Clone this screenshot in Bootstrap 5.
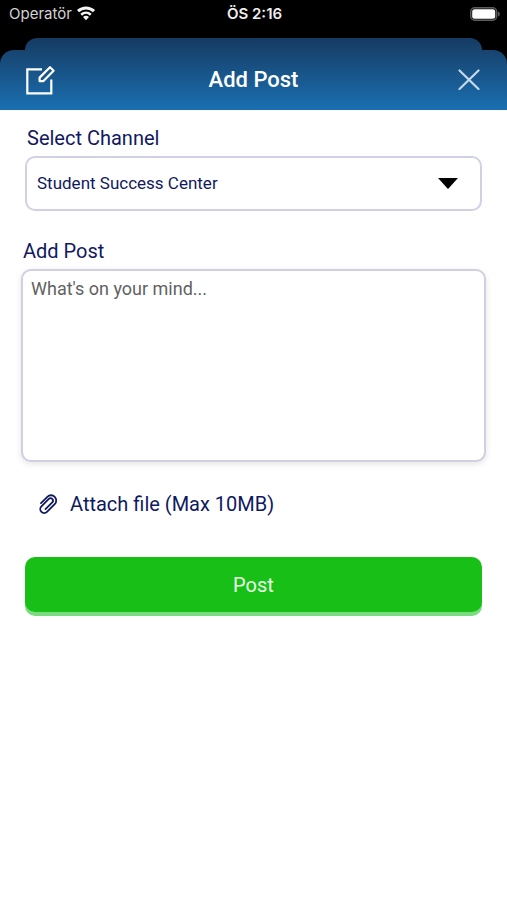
<!DOCTYPE html>
<html lang="en">
<head>
<meta charset="utf-8">
<meta name="viewport" content="width=device-width, initial-scale=1">
<title>Add Post</title>
<link href="https://cdn.jsdelivr.net/npm/bootstrap@5.3.0/dist/css/bootstrap.min.css" rel="stylesheet">
<style>
  body { font-family: Roboto, "Liberation Sans", sans-serif; color: #10195f; background: #fff; }
  .status-bar { height: 38px; padding: 0 7px 10px 9px; font: 15px/28px Inter, Roboto, sans-serif; color: #d2d2d2; }
  .status-time { font-weight: 600; color: #eee; }
  .back-sheet { height: 12px; margin: 0 25px; border-radius: 12px 12px 0 0; background: linear-gradient(#143b62, #17446f); }
  .sheet-header { height: 60px; padding: 0 25px; border-radius: 14px 14px 0 0; background: linear-gradient(#17446f, #1a6fb2); }
  .sheet-title { font-size: 22px; line-height: 28px; font-weight: 500; }
  .icon-button { width: 32px; height: 32px; }
  .form-area { padding: 16px 25px; }
  .field-label { margin: 0 2px 6px; font-size: 20px; line-height: 24px; }
  .channel-select { height: 55px; padding: 0 10px; font-size: 17px; color: #10195f; border: 2px solid #d0d0e6; border-radius: 10px;
    background-image: url("data:image/svg+xml,%3Csvg xmlns='http://www.w3.org/2000/svg' viewBox='0 0 20 11'%3E%3Cpath d='M0 0h20L10 11z'/%3E%3C/svg%3E");
    background-size: 20px 11px; background-position: right 22px center; }
  .post-block { margin: 28px -4px 0; }
  .post-text { height: 193px; padding: 6px 8px; font-size: 18px; line-height: 24px; border: 2px solid #d0d0e2; border-radius: 10px; resize: none; box-shadow: 0 2px 6px #0000001c; }
  .post-text::placeholder { color: #626262; }
  .attach { margin: 28px 0 0 11px; font-size: 20px; line-height: 28px; color: #10195f; }
  .post-button { height: 55px; margin-top: 39px; font-size: 20px; color: #e9ffe9; background: #17bf17; border-radius: 10px; box-shadow: 0 4px 0 #7bdb7f; }
  .post-button:hover { color: #fff; background: #14ad14; }
</style>
<script src="https://cdn.jsdelivr.net/npm/bootstrap@5.3.0/dist/js/bootstrap.bundle.min.js"></script>
</head>
<body>
<div class="bg-black">
  <div class="status-bar row g-0 align-items-center">
    <div class="col d-flex align-items-center">
      <span>Operatör</span>
      <svg class="ms-1" width="20" height="16" viewBox="0 0 20 16" fill="none" stroke="#f4f4f4" stroke-width="3" aria-hidden="true">
        <path d="M2 5.200C6.600.8 13.400.8 18 5.200"/>
        <path d="M5.200 8.800c2.800-2.700 6.800-2.700 9.600 0" stroke-width="2.600"/>
        <path d="M10 14.200 7 11c1.700-1.600 4.300-1.600 6 0z" fill="#f4f4f4" stroke="none"/>
      </svg>
    </div>
    <div class="col-auto status-time">ÖS 2:16</div>
    <div class="col d-flex justify-content-end">
      <svg width="30" height="14" viewBox="0 0 30 14" aria-hidden="true">
        <rect x=".7" y=".7" width="26" height="12.600" rx="4" fill="#111" stroke="#5c5c5c" stroke-width="1.400"/>
        <rect x="2.200" y="2.200" width="23" height="9.600" rx="2.500" fill="#fff"/>
        <path d="M28 4.600c2.400.8 2.400 4 0 4.800z" fill="#5c5c5c"/>
      </svg>
    </div>
  </div>
  <div class="back-sheet"></div>
  <header class="sheet-header d-flex align-items-center justify-content-between text-white">
    <button type="button" class="icon-button btn p-0 border-0 d-flex" aria-label="Compose">
      <svg width="32" height="32" viewBox="0 0 32 32" fill="none" stroke="#fff" stroke-width="2.200" aria-hidden="true">
        <path d="M17 5.300H2.300v24h24V15.500"/>
        <path d="M14.600 17.200v-3.600L25 3.200l3.600 3.500-10.400 10.500z" stroke-linejoin="round"/>
      </svg>
    </button>
    <h1 class="sheet-title m-0">Add Post</h1>
    <button type="button" class="icon-button btn p-0 border-0 d-flex justify-content-end align-items-center" aria-label="Close">
      <svg width="26" height="22" viewBox="0 0 26 22" fill="none" stroke="#c5d9ec" stroke-width="2.200" stroke-linecap="round" aria-hidden="true">
        <path d="M3.500 1.500l19 18.500M22.500 1.500 3.500 20"/>
      </svg>
    </button>
  </header>
</div>
<main>
  <form class="form-area">
    <label class="field-label d-block" for="channel">Select Channel</label>
    <select class="channel-select form-select" id="channel">
      <option>Student Success Center</option>
    </select>
    <div class="post-block">
      <label class="field-label d-block" for="post">Add Post</label>
      <textarea class="post-text form-control" id="post" placeholder="What's on your mind..."></textarea>
    </div>
    <button type="button" class="attach btn p-0 border-0 d-flex align-items-center">
      <svg class="me-2" width="26" height="24" viewBox="0 0 26 24" fill="none" stroke="#10195f" stroke-width="1.800" stroke-linecap="round" stroke-linejoin="round" aria-hidden="true">
        <path transform="translate(11.500 12) rotate(45)" d="M-5.200 4V-5a5.200 5.200 0 0 1 10.400 0V6a3.900 3.900 0 0 1-7.800 0V-4.500a2.400 2.400 0 0 1 4.800 0V5"/>
      </svg>
      <span>Attach file (Max 10MB)</span>
    </button>
    <button type="submit" class="post-button btn w-100 p-0 border-0">Post</button>
  </form>
</main>
</body>
</html>
